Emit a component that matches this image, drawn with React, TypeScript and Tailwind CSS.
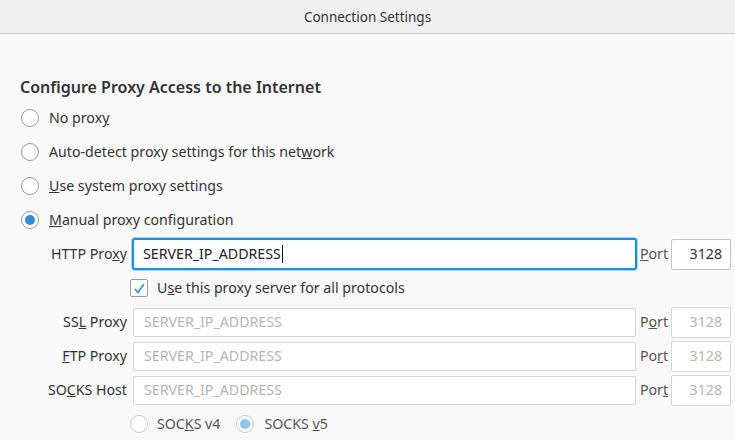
import React from "react";

const font = { fontFamily: '"Noto Sans", "Open Sans", sans-serif' };

function Radio({ checked, disabled }: { checked?: boolean; disabled?: boolean }) {
  return (
    <span
      className={`flex items-center justify-center w-[18px] h-[18px] rounded-full border bg-white shrink-0 ${
        disabled ? "border-[#c8c8c8]" : "border-[#9a9a9a]"
      }`}
    >
      {checked && (
        <span
          className={`w-[10px] h-[10px] rounded-full ${
            disabled ? "bg-[#8ec5ea]" : "bg-[#2b8ee0]"
          }`}
        />
      )}
    </span>
  );
}

function ProxyRow({
  label,
  port,
  focused,
}: {
  label: React.ReactNode;
  port: React.ReactNode;
  focused?: boolean;
}) {
  return (
    <div className="flex items-center h-[34px]">
      <div className="w-[128px] text-right text-[#333] pr-[1px]">{label}</div>
      {focused ? (
        <div className="ml-[4px] w-[505px] h-[32px] flex items-center rounded-[3px] border-2 border-[#1a8cf0] shadow-[0_0_0_1px_rgba(26,140,240,0.35)] bg-white pl-[9px] text-[#222]">
          SERVER_IP_ADDRESS
          <span className="w-px h-[18px] bg-[#111] ml-[1px]" />
        </div>
      ) : (
        <div className="ml-[5px] w-[503px] h-[29px] flex items-center rounded-[2px] border border-[#d4d4d4] bg-white pl-[10px] text-[#b5b5b5]">
          SERVER_IP_ADDRESS
        </div>
      )}
      <div className={`w-[34px] text-center ${focused ? "ml-0" : "ml-px"} text-[#555]`}>{port}</div>
      <div
        className={`w-[60px] h-[31px] flex items-center justify-end pr-[8px] rounded-[2px] border bg-white ${
          focused ? "border-[#c4c4c4] text-[#333]" : "border-[#d7d7d7] text-[#b5b5b5]"
        }`}
      >
        3128
      </div>
    </div>
  );
}

export default function App() {
  return (
    <div className="w-[735px] h-[440px] overflow-hidden bg-[#f9f9f9] text-[14.2px]" style={font}>
      <div className="h-[34px] pt-px flex items-center justify-center bg-[#f0f0f0] border-b border-[#c9c9c9] text-[13.5px] text-[#333]">
        Connection Settings
      </div>
      <div className="pt-[41px]">
        <h1 className="pl-[20px] h-[24px] leading-[24px] text-[16px] font-semibold text-[#333]">
          Configure Proxy Access to the Internet
        </h1>
        <div className="mt-[2px] pl-[21px] text-[#333]">
          <label className="flex items-center h-[34px] gap-[10px]">
            <Radio />
            <span>
              No prox<u>y</u>
            </span>
          </label>
          <label className="flex items-center h-[34px] gap-[10px]">
            <Radio />
            <span>
              Auto-detect proxy settings for this net<u>w</u>ork
            </span>
          </label>
          <label className="flex items-center h-[34px] gap-[10px]">
            <Radio />
            <span>
              <u>U</u>se system proxy settings
            </span>
          </label>
          <label className="flex items-center h-[34px] gap-[10px]">
            <Radio checked />
            <span>
              <u>M</u>anual proxy configuration
            </span>
          </label>
        </div>
        <div>
          <ProxyRow
            focused
            label={
              <>
                HTTP Pro<u>x</u>y
              </>
            }
            port={
              <>
                <u>P</u>ort
              </>
            }
          />
          <div className="flex items-center h-[34px] pl-[130px] gap-[9px] text-[#333]">
            <span className="w-[18px] h-[18px] flex items-center justify-center border border-[#9a9a9a] rounded-[2px] bg-white">
              <svg width="13" height="13" viewBox="0 0 13 13">
                <path d="M2 7 L5 10.5 L11 2" fill="none" stroke="#2b8ee0" strokeWidth="1.6" />
              </svg>
            </span>
            <span>
              U<u>s</u>e this proxy server for all protocols
            </span>
          </div>
          <ProxyRow
            label={
              <>
                SS<u>L</u> Proxy
              </>
            }
            port={
              <>
                P<u>o</u>rt
              </>
            }
          />
          <ProxyRow
            label={
              <>
                <u>F</u>TP Proxy
              </>
            }
            port={
              <>
                Po<u>r</u>t
              </>
            }
          />
          <ProxyRow
            label={
              <>
                SO<u>C</u>KS Host
              </>
            }
            port={
              <>
                Por<u>t</u>
              </>
            }
          />
          <div className="flex items-center h-[34px] pl-[130px] text-[#555]">
            <Radio disabled />
            <span className="ml-[9px]">
              SOC<u>K</u>S v4
            </span>
            <span className="ml-[16px]">
              <Radio checked disabled />
            </span>
            <span className="ml-[10px]">
              SOCKS <u>v</u>5
            </span>
          </div>
        </div>
      </div>
    </div>
  );
}
